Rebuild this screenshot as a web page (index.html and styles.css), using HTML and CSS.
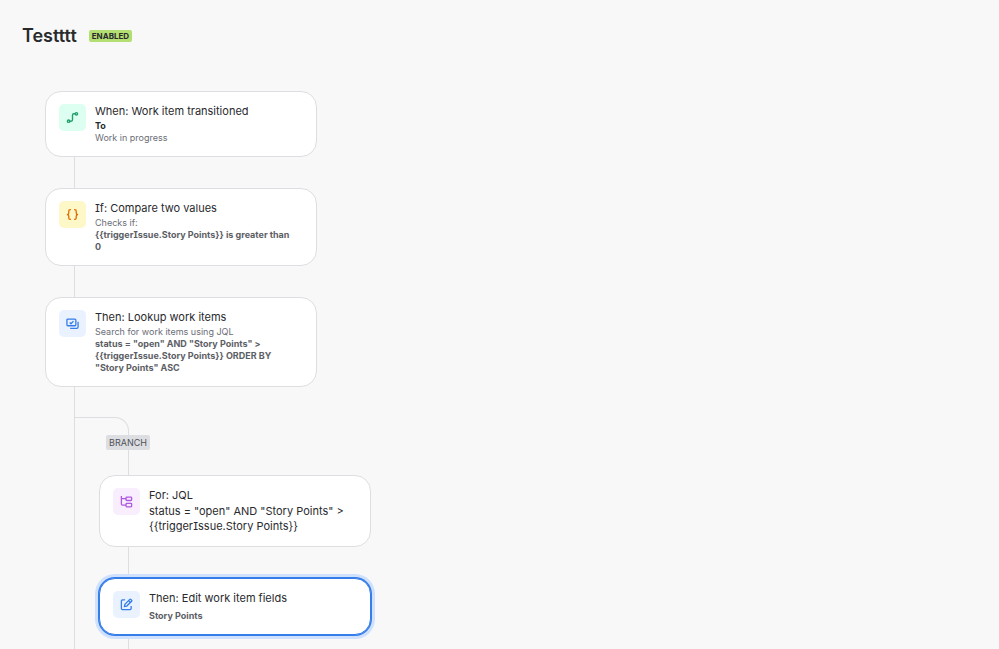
FILE: index.html
```
<!DOCTYPE html>
<html lang="en">
<head>
  <meta charset="UTF-8">
  <meta name="viewport" content="width=device-width, initial-scale=1.0">
  <title>Testttt</title>
  <link rel="stylesheet" href="styles.css">
</head>
<body>

<header class="header">
  <h1>Testttt</h1>
  <span class="status">ENABLED</span>
</header>

<main class="flow">
  <div class="card">
    <div class="icon green">
      <svg viewBox="0 0 14 14" width="13" height="13" fill="none" stroke="currentColor" stroke-width="1.5">
        <circle cx="2.800" cy="11" r="1.3"/>
        <circle cx="11.200" cy="3" r="1.3"/>
        <path d="M4.1 11H5.5Q7 11 7 9.5V4.5Q7 3 8.500 3H9.900"/>
      </svg>
    </div>
    <div class="text">
      <h2>When: Work item transitioned</h2>
      <p class="dark"><b>To</b></p>
      <p>Work in progress</p>
    </div>
  </div>
  <div class="connector"></div>

  <div class="card">
    <div class="icon yellow">
      <svg viewBox="0 0 14 14" width="13" height="13" fill="none" stroke="currentColor" stroke-width="1.4">
        <path d="M5.300 1.700H4.500Q3 1.700 3 3.200V5.300Q3 7 1 7Q3 7 3 8.700V10.800Q3 12.300 4.500 12.300H5.300"/>
        <path d="M8.700 1.700H9.500Q11 1.700 11 3.200V5.300Q11 7 13 7Q11 7 11 8.700V10.800Q11 12.300 9.500 12.300H8.700"/>
      </svg>
    </div>
    <div class="text">
      <h2>If: Compare two values</h2>
      <p>Checks if:</p>
      <p><b>{{triggerIssue.Story Points}} is greater than 0</b></p>
    </div>
  </div>
  <div class="connector"></div>

  <div class="card">
    <div class="icon blue">
      <svg viewBox="0 0 14 14" width="13" height="13" fill="none" stroke="currentColor" stroke-width="1.4">
        <rect x="1" y="2.200" width="9.600" height="7.200" rx="1"/>
        <path d="M4 6L5.400 7.300L8 4.500"/>
        <path d="M13 5V10.900Q13 12.300 11.600 12.300H4.500"/>
      </svg>
    </div>
    <div class="text">
      <h2>Then: Lookup work items</h2>
      <p>Search for work items using JQL</p>
      <p><b>status = "open" AND "Story Points" &gt; {{triggerIssue.Story Points}} ORDER BY "Story Points" ASC</b></p>
    </div>
  </div>

  <div class="branch">
    <div class="elbow"></div>
    <span class="branch-label">BRANCH</span>
    <div class="branch-items">
      <div class="connector short"></div>
      <div class="card">
        <div class="icon purple">
          <svg viewBox="0 0 14 14" width="13" height="13" fill="none" stroke="currentColor" stroke-width="1.4">
            <path d="M1.500 1V9.800Q1.500 11 2.700 11H6.500M1.500 4H6.500"/>
            <rect x="6.500" y="2.200" width="6" height="3.700" rx="0.800"/>
            <rect x="6.500" y="9" width="6" height="3.700" rx="0.800"/>
          </svg>
        </div>
        <div class="text">
          <h2>For: JQL</h2>
          <p class="query">status = "open" AND "Story Points" &gt; {{triggerIssue.Story Points}}</p>
        </div>
      </div>
      <div class="connector"></div>

      <div class="card selected">
        <div class="icon blue">
          <svg viewBox="0 0 14 14" width="13" height="13" fill="none" stroke="currentColor" stroke-width="1.4">
            <path d="M5.500 2H2.700Q1.500 2 1.500 3.200V11.300Q1.500 12.500 2.700 12.500H10.800Q12 12.500 12 11.300V8.500"/>
            <path d="M4.800 9.200L5.300 6.700L10.500 1.500Q11 1 11.500 1.500L12.500 2.500Q13 3 12.500 3.500L7.300 8.700Z"/>
            <path d="M9.200 2.800L11.200 4.800"/>
          </svg>
        </div>
        <div class="text">
          <h2>Then: Edit work item fields</h2>
          <p class="fields"><b>Story Points</b></p>
        </div>
      </div>
      <div class="connector tail"></div>
    </div>
  </div>
</main>

</body>
</html>
```

FILE: styles.css
```
* {
  box-sizing: border-box;
}
body {
  display: flex;
  flex-direction: column;
  min-height: 100vh;
  margin: 0;
  font-family: Inter, "Liberation Sans", sans-serif;
  font-feature-settings: "cv08";
  background-color: #f8f8f8;
  color: #292a2e;
}
h1, h2, p {
  margin: 0;
}
.header {
  display: flex;
  align-items: center;
  gap: 12px;
  padding: 24px 22px 0;
}
h1 {
  font-size: 18px;
  line-height: 24px;
  font-weight: 600;
}
.status {
  padding: 0 3px;
  border-radius: 2px;
  background-color: #b3df72;
  font-size: 8px;
  line-height: 12px;
  font-weight: 700;
}
.flow {
  display: flex;
  flex-direction: column;
  flex: 1;
  padding: 43px 45px 0;
}
.card {
  display: flex;
  align-items: flex-start;
  gap: 9px;
  width: 272px;
  padding: 12px 13px;
  border: 1px solid #dddee1;
  border-radius: 16px;
  background-color: #fff;
}
.card.selected {
  position: relative;
  border-color: #357de8;
  box-shadow: 0 0 0 1px #357de8, 0 0 0 4px #cfe1fd;
}
.icon {
  display: flex;
  align-items: center;
  justify-content: center;
  flex-shrink: 0;
  width: 27px;
  height: 27px;
  border-radius: 5px;
}
.green {
  background-color: #dcfff1;
  color: #22a06b;
}
.yellow {
  background-color: #fef7c8;
  color: #e06c00;
}
.blue {
  background-color: #e9f2fe;
  color: #357de8;
}
.purple {
  background-color: #f8eefe;
  color: #af59e1;
}
.text {
  flex: 1;
  min-width: 0;
  padding-right: 8px;
}
h2 {
  margin-bottom: 2px;
  font-size: 11px;
  line-height: 14px;
  font-weight: 400;
}
p {
  font-size: 9px;
  line-height: 12px;
  color: #6b6e76;
}
b {
  font-weight: 700;
  color: #5c5e65;
}
.dark b {
  color: #292a2e;
}
.query {
  font-size: 11px;
  line-height: 15px;
  color: #292a2e;
}
.fields {
  padding-top: 2px;
  line-height: 13px;
}
.connector {
  width: 1px;
  height: 31px;
  margin-left: 29px;
  background-color: #dddee1;
}
.connector.short {
  height: 25px;
}
.connector.tail {
  flex: 1;
  min-height: 13px;
}
.branch {
  display: flex;
  flex-direction: column;
  align-items: flex-start;
  flex: 1;
  margin-left: 29px;
  padding-top: 30px;
  border-left: 1px solid #dddee1;
}
.elbow {
  width: 54px;
  height: 18px;
  border: solid #dddee1;
  border-width: 1px 1px 0 0;
  border-top-right-radius: 14px;
}
.branch-label {
  margin-left: 31px;
  padding: 0 3px;
  border-radius: 2px;
  background-color: #dddee1;
  font-size: 9px;
  line-height: 15px;
  color: #505258;
}
.branch-items {
  display: flex;
  flex-direction: column;
  flex: 1;
  padding-left: 24px;
}
```
